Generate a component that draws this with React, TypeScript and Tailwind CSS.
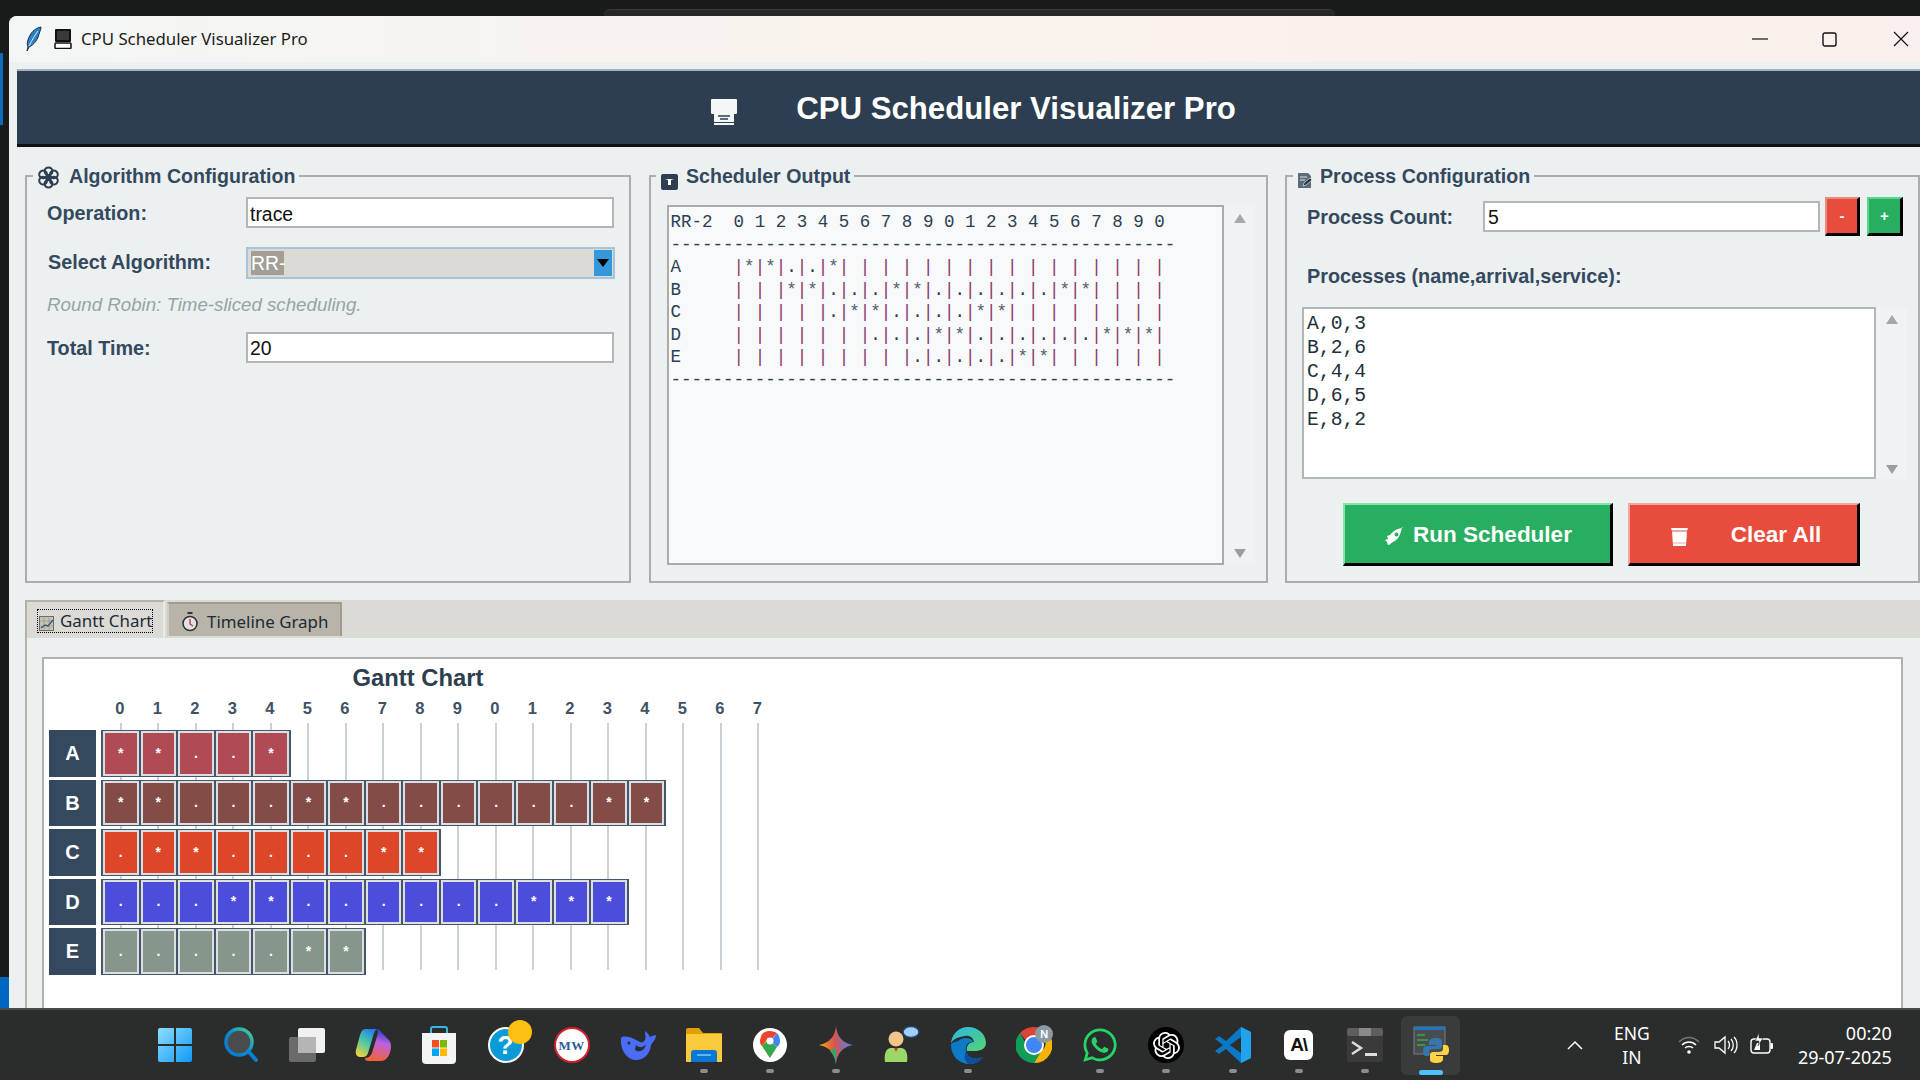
import React from "react";
import { FaWhatsapp } from "react-icons/fa";
import { SiOpenai } from "react-icons/si";

const SANS = "[font-family:'Liberation_Sans',Arial,sans-serif]";

function Arrow({ down = false, className = "" }: { down?: boolean; className?: string }) {
  return (
    <svg width="14" height="11" viewBox="0 0 14 11" className={className}>
      <polygon points={down ? "1,1 13,1 7,10" : "1,10 13,10 7,1"} fill={down ? "#999fa1" : "#a3a8aa"} />
    </svg>
  );
}

function Scrollbar({ top, bottom }: { top: string; bottom: string }) {
  return (
    <div className={`w-[31px] flex flex-col items-center justify-between bg-[#f0f3f4] ${top} ${bottom}`}>
      <Arrow />
      <Arrow down />
    </div>
  );
}

function Box({ title, icon, width, legendMl, children }: { title: string; icon: React.ReactNode; width: string; legendMl: string; children: React.ReactNode }) {
  return (
    <fieldset className={`${width} h-[421px] border-2 border-[#a9afb1] min-w-0`}>
      <legend className={`${legendMl} h-[28px] pt-[2px] flex items-center px-[4px] text-[19.6px] font-bold text-[#34495e]`}>
        {icon}
        <span>{title}</span>
      </legend>
      {children}
    </fieldset>
  );
}

const cells: Record<string, string> = {
  A: "**..*",
  B: "**...**......**",
  C: ".**....**",
  D: "...**......***",
  E: ".....**",
};
const cellColor: Record<string, string> = { A: "bg-[#b04a55]", B: "bg-[#834c47]", C: "bg-[#dd4628]", D: "bg-[#4d4ddb]", E: "bg-[#87968a]" };
const axis = ["0", "1", "2", "3", "4", "5", "6", "7", "8", "9", "0", "1", "2", "3", "4", "5", "6", "7"];

const outputLines = [
  "RR-2  0 1 2 3 4 5 6 7 8 9 0 1 2 3 4 5 6 7 8 9 0",
  "------------------------------------------------",
  "A     |*|*|.|.|*| | | | | | | | | | | | | | | |",
  "B     | | |*|*|.|.|.|*|*|.|.|.|.|.|.|*|*| | | |",
  "C     | | | | |.|*|*|.|.|.|.|*|*| | | | | | | |",
  "D     | | | | | | |.|.|.|*|*|.|.|.|.|.|.|*|*|*|",
  "E     | | | | | | | | |.|.|.|.|.|*|*| | | | | |",
  "------------------------------------------------",
];

function OutputLine({ text }: { text: string }) {
  return (
    <div className="h-[22.5px] leading-[22.5px]">
      {text.split("").map((c, i) =>
        c === "|" ? (
          <span key={i} className="text-[#8a3d6c]">|</span>
        ) : c === "*" ? (
          <span key={i} className="text-[#55606a]">*</span>
        ) : (
          <span key={i}>{c}</span>
        ),
      )}
    </div>
  );
}

function Win() {
  return (
    <svg width="36" height="36" viewBox="0 0 36 36">
      <defs>
        <linearGradient id="w1" x1="0" y1="0" x2="1" y2="1">
          <stop offset="0" stopColor="#8fdcff" />
          <stop offset="1" stopColor="#0f9bf5" />
        </linearGradient>
      </defs>
      <path d="M1 3a2 2 0 0 1 2-2h14v16H1zM19 1h14a2 2 0 0 1 2 2v14H19zM1 19h16v16H3a2 2 0 0 1-2-2zM19 19h16v14a2 2 0 0 1-2 2H19z" fill="url(#w1)" />
    </svg>
  );
}
function Search() {
  return (
    <svg width="36" height="36" viewBox="0 0 36 36">
      <defs>
        <linearGradient id="s1" x1="1" y1="0" x2="0" y2="1">
          <stop offset="0" stopColor="#47d68c" />
          <stop offset="0.5" stopColor="#0b8ad6" />
          <stop offset="1" stopColor="#0a78c8" />
        </linearGradient>
      </defs>
      <circle cx="16" cy="15" r="13" fill="#4a4b4d" stroke="url(#s1)" strokeWidth="3.5" />
      <path d="M26 25l7 8" stroke="#0b7fd0" strokeWidth="4" strokeLinecap="round" />
    </svg>
  );
}
function TaskView() {
  return (
    <svg width="38" height="36" viewBox="0 0 38 36">
      <rect x="1" y="10" width="27" height="25" rx="2" fill="#6a6a6a" />
      <rect x="10" y="1" width="27" height="25" rx="2" fill="#f1f1f1" />
      <rect x="10" y="10" width="18" height="16" fill="#b5b5b5" />
    </svg>
  );
}
function Copilot() {
  return (
    <svg width="36" height="36" viewBox="0 0 36 36">
      <defs>
        <linearGradient id="c1" x1="0.7" y1="0" x2="0.2" y2="1">
          <stop offset="0" stopColor="#1f7ff0" />
          <stop offset="0.5" stopColor="#4fc9a0" />
          <stop offset="1" stopColor="#f4d23a" />
        </linearGradient>
        <linearGradient id="c2" x1="0.5" y1="0" x2="0.3" y2="1">
          <stop offset="0" stopColor="#1e45c8" />
          <stop offset="0.4" stopColor="#c060e0" />
          <stop offset="1" stopColor="#f5632a" />
        </linearGradient>
      </defs>
      <path d="M22 2c2 0 3 1 4 3l7 7c2 2 3 4 3 7 0 8-4 15-10 15H13c-2 0-3-1-3-3 3 0 6-2 7-5l6-20z" fill="url(#c2)" />
      <path d="M10 2h13c-2 0-3 2-4 4l-6 20c-1 3-3 4-5 4H5c-3 0-5-3-4-7l4-15c1-4 3-6 5-6z" fill="url(#c1)" />
    </svg>
  );
}
function Store() {
  return (
    <svg width="36" height="38" viewBox="0 0 36 38">
      <path d="M10 8V3a2 2 0 0 1 2-2h12a2 2 0 0 1 2 2v5" fill="none" stroke="#38b6e8" strokeWidth="2" />
      <path d="M1 7h34v27a4 4 0 0 1-4 4H5a4 4 0 0 1-4-4z" fill="#f4f4f4" />
      <rect x="11" y="14" width="7" height="7.5" fill="#f25022" />
      <rect x="19" y="14" width="7" height="7.5" fill="#7fba00" />
      <rect x="11" y="22.5" width="7" height="7.5" fill="#00a4ef" />
      <rect x="19" y="22.5" width="7" height="7.5" fill="#ffb900" />
    </svg>
  );
}
function Help() {
  return (
    <div className="relative w-[36px] h-[36px] rounded-full bg-[#0a9ad8] border-2 border-white flex items-center justify-center">
      <span className={`${SANS} text-white font-bold text-[26px] leading-none`}>?</span>
      <span className="absolute -top-[9px] left-[18px] w-[24px] h-[24px] rounded-full bg-[#fcc010]" />
    </div>
  );
}
function MW() {
  return (
    <div className="w-[36px] h-[36px] rounded-full bg-white border-2 border-[#d3202f] flex items-center justify-center">
      <span className="[font-family:'Liberation_Serif',serif] text-[#2b5d94] font-bold text-[13px] leading-none tracking-[0.5px]">MW</span>
    </div>
  );
}
function Deep() {
  return (
    <svg width="36" height="30" viewBox="0 0 36 30">
      <path d="M1 8C3 5 12 7 18 11c3 2 5 2 7-1 1-2 0-6 0-9 3 2 4 4 5 6 2-1 4-2 6-2 0 4-3 7-5 10-1 9-7 15-15 15C7 30 0 20 1 8z" fill="#4a6cf7" />
      <path d="M16 15c3 3 7 3 10-1-1 6-6 9-11 6z" fill="#2b2c2c" />
      <circle cx="9" cy="13" r="1.6" fill="#2b2c2c" />
    </svg>
  );
}
function Folder() {
  return (
    <svg width="38" height="36" viewBox="0 0 38 36">
      <path d="M1 3a2 2 0 0 1 2-2h11l4 5h18a1 1 0 0 1 1 1v4H1z" fill="#e0a000" />
      <path d="M1 7h36v27a1 1 0 0 1-1 1H2a1 1 0 0 1-1-1z" fill="#fbc93c" />
      <path d="M6 26a3 3 0 0 1 3-3h20a3 3 0 0 1 3 3v9H6z" fill="#0a78d0" />
      <rect x="12" y="27" width="14" height="2" fill="#5cb8f5" />
    </svg>
  );
}
function Maps() {
  return (
    <svg width="36" height="36" viewBox="0 0 36 36">
      <circle cx="18" cy="18" r="17" fill="#fff" />
      <path d="M18 4c-6 0-10 4-10 10 0 2 1 4 2 5l8 12z" fill="#fbbc04" />
      <path d="M10 7L8 14c0 2 1 4 2 5l6-8z" fill="#ea4335" />
      <path d="M18 31l7-11-8-8-7 7z" fill="#34a853" />
      <path d="M25 6c2 2 3 5 3 8s-1 4-3 6l-6-6z" fill="#4285f4" />
      <path d="M10 7c2-2 5-3 8-3 3 0 5 1 7 2l-6 7z" fill="#ea4335" />
      <circle cx="18" cy="14" r="3.5" fill="#fff" />
    </svg>
  );
}
function Gemini() {
  return (
    <svg width="34" height="38" viewBox="0 0 34 38">
      <defs>
        <linearGradient id="g1" x1="0" y1="0.5" x2="1" y2="0.5">
          <stop offset="0" stopColor="#f4b400" />
          <stop offset="0.45" stopColor="#d9534f" />
          <stop offset="1" stopColor="#4285f4" />
        </linearGradient>
      </defs>
      <path d="M17 0c1 10 6 17 17 19-11 2-16 9-17 19C16 28 11 21 0 19 11 17 16 10 17 0z" fill="url(#g1)" />
      <path d="M17 22c0 6 0 12 0 16-1-6-3-10-6-13z" fill="#2fa866" />
    </svg>
  );
}
function Person() {
  return (
    <svg width="38" height="38" viewBox="0 0 38 38">
      <circle cx="13" cy="13" r="7.5" fill="#f2c58a" />
      <path d="M2 36c-1-6 0-13 5-14h12c5 1 6 8 5 14z" fill="#9bd86a" />
      <path d="M11 22h4l-2 4z" fill="#d33" />
      <ellipse cx="28" cy="6" rx="8" ry="5.5" fill="#9fd0f5" stroke="#24446b" strokeWidth="1.5" />
    </svg>
  );
}
function Edge() {
  return (
    <svg width="36" height="38" viewBox="0 0 36 38">
      <defs>
        <linearGradient id="e1" x1="0" y1="0" x2="1" y2="1">
          <stop offset="0" stopColor="#2cb5e8" />
          <stop offset="1" stopColor="#54d66e" />
        </linearGradient>
      </defs>
      <path d="M1 19C1 8 9 1 18 1c10 0 18 7 18 16 0 6-6 8-11 8H17c-1-5 2-9 7-9-1-5-5-7-9-6C7 11 1 14 1 19z" fill="url(#e1)" />
      <path d="M1 19c0 11 8 19 19 19 6 0 10-3 13-7-7 3-15 2-17-6-1-5 2-10 8-9-4-5-11-5-16-1-4 1-7 2-7 4z" fill="#0c7bc8" />
      <path d="M16 25c2 8 10 9 17 6-3 4-7 7-13 7-2 0-4-2-5-5-1-3 0-6 1-8z" fill="#0a4f9a" />
    </svg>
  );
}
function Chrome() {
  return (
    <div className="relative w-[36px] h-[38px]">
      <svg width="36" height="38" viewBox="0 0 36 38">
        <path d="M18 1a18 18 0 0 1 16 9H18a9 9 0 0 0-8 5L4 7A18 18 0 0 1 18 1z" fill="#db4437" />
        <path d="M34 10a18 18 0 0 1-16 27l7-12a9 9 0 0 0 1-15z" fill="#f4b400" />
        <path d="M18 37A18 18 0 0 1 4 7l6 11a9 9 0 0 0 15 7z" fill="#0f9d58" />
        <circle cx="18" cy="19" r="9" fill="#4285f4" stroke="#fff" strokeWidth="2" />
      </svg>
      <span className={`absolute -top-[1px] -right-[1px] w-[18px] h-[18px] rounded-full bg-[#8a9aa4] text-white text-[11px] font-bold flex items-center justify-center ${SANS}`}>N</span>
    </div>
  );
}
function OpenAI() {
  return (
    <div className="w-[36px] h-[36px] rounded-full bg-black flex items-center justify-center">
      <SiOpenai size={27} color="#fff" />
    </div>
  );
}
function VSCode() {
  return (
    <svg width="36" height="38" viewBox="0 0 36 38">
      <path d="M26 1l10 5v26l-10 5-15-14-7 5-4-3 8-6-8-6 4-3 7 5z" fill="#0a78c4" />
      <path d="M26 1l10 5v26l-10 5z" fill="#20a4ee" />
      <path d="M26 11L15 19l11 8z" fill="#2b2c2c" />
    </svg>
  );
}
function Anthropic() {
  return (
    <div className="w-[29px] h-[30px] mt-[-1px] rounded-[6px] bg-white flex items-center justify-center">
      <span className={`${SANS} text-[#111] font-bold text-[19px] leading-none tracking-[-1px]`}>A\</span>
    </div>
  );
}
function Terminal() {
  return (
    <svg width="36" height="34" viewBox="0 0 36 34">
      <rect width="36" height="34" rx="2" fill="#3a3a3a" />
      <rect width="36" height="8" rx="2" fill="#5e5e5e" />
      <rect x="12" width="12" height="8" fill="#8a8a8a" />
      <path d="M5 14l9 6-9 6" stroke="#ddd" strokeWidth="2.5" fill="none" />
      <rect x="18" y="25" width="12" height="3" fill="#ddd" />
    </svg>
  );
}
function Python() {
  return (
    <svg width="36" height="38" viewBox="0 0 36 38">
      <rect x="1" y="1" width="31" height="27" fill="#4a4d50" stroke="#7a7d80" />
      <rect x="1" y="1" width="31" height="3" fill="#1a78c8" />
      <path d="M4 9h8M4 14h11M4 19h8" stroke="#3aa83a" strokeWidth="1.5" />
      <path d="M23 12c-4 0-7 1-7 4v3h7v1h-10c-2 0-3 2-3 5s1 5 3 5h3v-4c0-2 2-3 4-3h6c2 0 3-2 3-3v-5c0-2-3-3-6-3z" fill="#3776ab" />
      <path d="M23 37c4 0 7-1 7-4v-3h-7v-1h10c2 0 3-2 3-5s-1-5-3-5h-3v4c0 2-2 3-4 3h-6c-2 0-3 2-3 3v5c0 2 3 3 6 3z" fill="#ffd343" />
    </svg>
  );
}

const dock: { node: React.ReactNode; dot?: boolean }[] = [
  { node: <Win /> },
  { node: <Search /> },
  { node: <TaskView /> },
  { node: <Copilot /> },
  { node: <Store /> },
  { node: <Help /> },
  { node: <MW /> },
  { node: <Deep /> },
  { node: <Folder />, dot: true },
  { node: <Maps />, dot: true },
  { node: <Gemini />, dot: true },
  { node: <Person /> },
  { node: <Edge />, dot: true },
  { node: <Chrome /> },
  { node: <FaWhatsapp size={38} color="#25d366" />, dot: true },
  { node: <OpenAI />, dot: true },
  { node: <VSCode />, dot: true },
  { node: <Anthropic />, dot: true },
  { node: <Terminal />, dot: true },
];

function TitleBar() {
  return (
    <div className="h-[46px] shrink-0 rounded-tl-[8px] flex items-center bg-gradient-to-r from-[#f3f6f5] via-[#faf2ec] to-[#faf0ed] [font-family:'Noto_Sans',sans-serif]">
      <svg width="16" height="26" viewBox="0 0 16 26" className="ml-[17px]">
        <path d="M15 1C9 2 4 7 2 14c-1 3-1 5 0 7l-1 4 2-4c5-2 9-8 10-13 1-3 2-5 2-7z" fill="#2f7fc4" stroke="#12324f" strokeWidth="1" />
        <path d="M12 5C9 9 6 14 3 20" stroke="#dcecf8" strokeWidth="1" fill="none" />
      </svg>
      <svg width="18" height="20" viewBox="0 0 18 20" className="ml-[12px]">
        <rect x="1" y="0" width="16" height="13" rx="1" fill="#111" />
        <rect x="3" y="2" width="12" height="9" fill="#3a3a3a" />
        <rect x="1" y="14" width="16" height="5.5" rx="1" fill="#fff" stroke="#111" strokeWidth="1.5" />
      </svg>
      <span className="ml-[9px] text-[16.8px] text-[#1c1c1c] whitespace-nowrap">CPU Scheduler Visualizer Pro</span>
      <div className="ml-auto flex items-center">
        <svg width="16" height="16" viewBox="0 0 16 16" className="mr-[54px]">
          <path d="M0 8h16" stroke="#111" strokeWidth="1.2" />
        </svg>
        <svg width="15" height="15" viewBox="0 0 15 15" className="mr-[56px]">
          <rect x="1" y="1" width="13" height="13" rx="2" fill="none" stroke="#111" strokeWidth="1.4" />
        </svg>
        <svg width="16" height="16" viewBox="0 0 16 16" className="mr-[11px]">
          <path d="M1 1l14 14M15 1L1 15" stroke="#111" strokeWidth="1.2" />
        </svg>
      </div>
    </div>
  );
}

function Header() {
  return (
    <div className="ml-[8px] mt-[7px] h-[78px] shrink-0 bg-[#2c3e50] border-t-2 border-t-[#a9b0b5] border-b-[3px] border-b-[#0e1216] flex items-center justify-center pl-[10px]">
      <svg width="26" height="26" viewBox="0 0 26 26" className="mt-[8px]">
        <rect x="0" y="0" width="26" height="15" rx="1" fill="#f4f6f7" />
        <rect x="3" y="15" width="20" height="11" fill="#f4f6f7" />
        <path d="M7 17h12M9 20h8" stroke="#2c3e50" strokeWidth="1.5" />
        <rect x="3" y="23" width="20" height="1" fill="#2c3e50" />
      </svg>
      <span className="ml-[59px] mt-[4px] text-[31.2px] font-bold text-white whitespace-nowrap">CPU Scheduler Visualizer Pro</span>
    </div>
  );
}

function GearIcon() {
  const a = [0, 60, 120, 180, 240, 300];
  return (
    <svg width="23" height="23" viewBox="0 0 24 24" className="mr-[9px]">
      {a.map((d) => (
        <circle key={d} cx="12" cy="5.5" r="4" fill="none" stroke="#2c3e50" strokeWidth="2.2" transform={`rotate(${d} 12 12)`} />
      ))}
      <circle cx="12" cy="12" r="2.5" fill="#2c3e50" />
    </svg>
  );
}

function AlgorithmGroup() {
  return (
    <Box title="Algorithm Configuration" icon={<GearIcon />} width="w-[606px]" legendMl="ml-[6px]">
      <div className="mt-[7px] flex items-center">
        <div className="w-[219px] pl-[20px] pt-[2px] text-[19.8px] font-bold text-[#34495e]">Operation:</div>
        <div className="w-[368px] h-[31px] bg-white border-2 border-[#b3b6b7] flex items-center pl-[2px] pt-[3px] text-[19.4px] text-[#111]">trace</div>
      </div>
      <div className="mt-[18px] flex items-center">
        <div className="w-[219px] pl-[21px] text-[19.8px] font-bold text-[#34495e]">Select Algorithm:</div>
        <div className="w-[369px] h-[32px] bg-[#dcdad5] border-2 border-[#a9c4d8] flex items-center pl-[3px] pr-[1px] justify-between">
          <span className="h-[24px] w-[33px] bg-[#a39f98] text-white text-[19.4px] leading-[24px]">RR-</span>
          <span className="w-[18px] h-[26px] bg-[#3498db] flex items-center justify-center">
            <svg width="12" height="8" viewBox="0 0 12 8">
              <polygon points="0,0 12,0 6,8" fill="#000" />
            </svg>
          </span>
        </div>
      </div>
      <div className="mt-[16px] h-[20px] leading-[20px] pl-[20px] text-[18.7px] italic text-[#95a5a6] whitespace-nowrap">Round Robin: Time-sliced scheduling.</div>
      <div className="mt-[17px] flex items-center">
        <div className="w-[219px] pl-[20px] pt-[2px] text-[19.8px] font-bold text-[#34495e]">Total Time:</div>
        <div className="w-[368px] h-[31px] bg-white border-2 border-[#b3b6b7] flex items-center pl-[2px] pt-[2px] text-[19.4px] text-[#111]">20</div>
      </div>
    </Box>
  );
}

function OutputGroup() {
  return (
    <Box
      title="Scheduler Output"
      icon={
        <svg width="17" height="16" viewBox="0 0 17 16" className="mr-[8px] ml-[1px] mt-[10px]">
          <rect width="17" height="16" rx="2" fill="#2c3e50" />
          <path d="M4 5h9l-3 1v5H7V6z" fill="#fff" />
        </svg>
      }
      width="w-[619px]"
      legendMl="ml-[5px]"
    >
      <div className="mt-[15px] ml-[16px] flex h-[360px]">
        <div className="w-[557px] bg-[#f8f9fa] border-2 border-[#a9acad] pl-[1.5px] pt-[4px] [font-family:'Liberation_Mono',monospace] text-[17.5px] text-[#2c3e50] whitespace-pre">
          {outputLines.map((l, i) => (
            <OutputLine key={i} text={l} />
          ))}
        </div>
        <Scrollbar top="pt-[8px]" bottom="pb-[6px]" />
      </div>
    </Box>
  );
}

function ProcessGroup() {
  const raised = "border-t-2 border-l-2 border-r-[3px] border-b-[3px] border-r-black border-b-black";
  return (
    <Box
      title="Process Configuration"
      icon={
        <svg width="16" height="16" viewBox="0 0 16 16" className="mr-[7px] mt-[8px]">
          <path d="M1 0h10l3 3v12H1z" fill="#5c6b78" />
          <path d="M3 4h7M3 7h5" stroke="#dfe4e8" strokeWidth="1" />
          <path d="M6 13l1-3 6-5 2 2-6 5z" fill="#223140" stroke="#fff" strokeWidth="0.6" />
        </svg>
      }
      width="flex-1"
      legendMl="ml-[6px]"
    >
      <div className="mt-[7px] flex items-center h-[39px]">
        <div className="w-[196px] pl-[20px] pt-[2px] text-[19.8px] font-bold text-[#34495e]">Process Count:</div>
        <div className="w-[337px] h-[31px] bg-white border-2 border-[#b3b6b7] flex items-center pl-[3px] pt-[2px] text-[19.4px] text-[#111]">5</div>
        <div className={`ml-[5px] w-[35px] h-[39px] bg-[#e74c3c] border-t-[#e98a80] border-l-[#e98a80] flex items-center justify-center text-white font-bold text-[15px] ${raised}`}>-</div>
        <div className={`ml-[7px] w-[36px] h-[39px] bg-[#27ae60] border-t-[#58d68d] border-l-[#58d68d] flex items-center justify-center text-white font-bold text-[15px] ${raised}`}>+</div>
      </div>
      <div className="mt-[28px] h-[24px] leading-[24px] pl-[20px] text-[19.8px] font-bold text-[#34495e] whitespace-nowrap">Processes (name,arrival,service):</div>
      <div className="mt-[19px] ml-[15px] flex h-[172px]">
        <div className="w-[574px] bg-white border-2 border-[#b3b6b7] pl-[3px] pt-[3px] [font-family:'Liberation_Mono',monospace] text-[19.7px] leading-[24px] text-[#22303c] whitespace-pre">
          {"A,0,3\nB,2,6\nC,4,4\nD,6,5\nE,8,2"}
        </div>
        <Scrollbar top="pt-[7px]" bottom="pb-[4px]" />
      </div>
      <div className="mt-[24px] ml-[56px] flex gap-[15px] text-white font-bold text-[22.5px]">
        <div className={`w-[270px] h-[63px] bg-[#27ae60] border-t-[#7ee8a8] border-l-[#7ee8a8] flex items-center justify-center pt-[2px] pl-[1px] ${raised}`}>
          <svg width="20" height="20" viewBox="0 0 20 20" className="mr-[9px] mt-[4px]">
            <path d="M19 1c-5 0-10 3-13 7L3 9l1 3-3 1 2 2 1 3 3-1-1 0 3-2c5-2 8-8 9-15z" fill="#fff" />
            <circle cx="12.5" cy="7.5" r="2" fill="#27ae60" />
          </svg>
          <span>Run Scheduler</span>
        </div>
        <div className={`w-[232px] h-[63px] bg-[#e74c3c] border-t-[#f5a59c] border-l-[#f5a59c] flex items-center justify-center pt-[2px] pl-[4px] ${raised}`}>
          <svg width="19" height="20" viewBox="0 0 19 20" className="mr-[42px] mt-[4px]">
            <path d="M1 1h17l-1 3-1 15H3L2 4z" fill="#fff" />
            <path d="M2 4h15" stroke="#e74c3c" strokeWidth="1" />
            <path d="M3 16h13" stroke="#e9a79f" strokeWidth="1" />
          </svg>
          <span>Clear All</span>
        </div>
      </div>
    </Box>
  );
}

function Tabs() {
  return (
    <div className="ml-[16px] mt-[17px] h-[38px] shrink-0 bg-[#dcdad5] flex items-end [font-family:'Noto_Sans',sans-serif] text-[16.9px] text-[#1e2a36]">
      <div className="w-[140px] h-[38px] bg-[#dcdad5] border-t-2 border-l-2 border-r-2 border-t-[#b5b2a8] border-l-[#b5b2a8] border-r-[#ecebe7] pl-[10px] pt-[7px]">
        <div className="w-[116px] h-[24px] border border-dotted border-black flex items-center pl-[1px] whitespace-nowrap overflow-hidden">
          <svg width="15" height="15" viewBox="0 0 15 15" className="mr-[6px] mt-[4px] shrink-0">
            <rect x="0.5" y="0.5" width="14" height="14" fill="#c8c3b4" stroke="#6a6a6a" />
            <path d="M0 10h15M0 5h15M5 0v15M10 0v15" stroke="#8a8a8a" strokeWidth="0.6" />
            <path d="M2 12l4-3 3 1 5-6" stroke="#3a5a7a" strokeWidth="1.4" fill="none" />
          </svg>
          <span>Gantt Chart</span>
        </div>
      </div>
      <div className="ml-[2px] w-[175px] h-[34px] mb-[2px] bg-[#b8b4a9] border-t-2 border-l-2 border-r-2 border-t-[#a09c90] border-l-[#cfccc3] border-r-[#a09c90] flex items-center pl-[13px] pt-[3px] whitespace-nowrap">
        <svg width="16" height="20" viewBox="0 0 16 20" className="mr-[9px]">
          <rect x="5.5" y="0" width="5" height="2" fill="#333" />
          <circle cx="8" cy="11.5" r="7" fill="#dfe3e6" stroke="#333" strokeWidth="1.6" />
          <path d="M8 7v5l3 2" stroke="#b33" strokeWidth="1.3" fill="none" />
        </svg>
        <span>Timeline Graph</span>
      </div>
    </div>
  );
}

function Gantt() {
  return (
    <div className={`flex-1 ml-[16px] border-l-2 border-l-[#b5b2a8] pl-[15px] pt-[19px] ${SANS}`}>
      <div className="h-full mr-[17px] bg-white border-2 border-b-0 border-[#b0b2b0]">
        <div className="mt-[4px] w-[748px] h-[30px] leading-[30px] text-center text-[23.8px] font-bold text-[#2c3e50]">Gantt Chart</div>
        <div className="mt-[5px] ml-[57.2px] flex h-[20px]">
          {axis.map((n, i) => (
            <div key={i} className="w-[37.5px] text-center text-[16.5px] leading-[20px] font-bold text-[#3e5166]">{n}</div>
          ))}
        </div>
        <div className="relative ml-[5px] mt-[5px] h-[252px] pt-[7px]">
          <div className="absolute left-[53px] top-0 h-[247px] flex">
            {axis.map((_, i) => (
              <div key={i} className="w-[37.5px] flex justify-center">
                <div className="w-[2px] h-full bg-[#ccd1d5]" />
              </div>
            ))}
          </div>
          <div className="relative flex flex-col gap-[3px]">
            {Object.keys(cells).map((k) => (
              <div key={k} className="flex h-[46.5px]">
                <div className="w-[47px] mr-[5px] bg-[#34495e] text-white font-bold text-[20px] flex items-center justify-center">{k}</div>
                <div className="flex p-[1px] bg-[#46566a]">
                  {cells[k].split("").map((c, i) => (
                    <div key={i} className="w-[37.55px] px-[1px] h-full bg-[#46566a]">
                      <div className={`h-full border-2 border-[#dcdfe1] flex items-center justify-center text-white font-bold text-[14px] ${cellColor[k]}`}>{c}</div>
                    </div>
                  ))}
                </div>
              </div>
            ))}
          </div>
        </div>
      </div>
    </div>
  );
}

function Taskbar() {
  return (
    <div className="h-[72px] shrink-0 bg-[#2b2c2c] border-t-2 border-t-[#4a4a4a] flex pl-[142px] [font-family:'Noto_Sans',sans-serif]">
      {dock.map((d, i) => (
        <div key={i} className="relative w-[66.1px] flex items-center justify-center">
          {d.node}
          {d.dot && <span className="absolute bottom-[7px] left-[29px] w-[8px] h-[4px] rounded-full bg-[#8c8c8c]" />}
        </div>
      ))}
      <div className="relative w-[66.1px] flex items-center justify-center">
        <div className="w-[59px] h-[59px] rounded-[6px] bg-[#3a3b3b] flex items-center justify-center">
          <Python />
        </div>
        <span className="absolute bottom-[5px] left-[21px] w-[24px] h-[5px] rounded-full bg-[#4cc2ff]" />
      </div>
      <div className="flex items-center text-white">
        <svg width="16" height="10" viewBox="0 0 16 10" className="ml-[103px]">
          <path d="M1 9l7-7 7 7" fill="none" stroke="#fff" strokeWidth="1.5" />
        </svg>
        <div className="ml-[25px] w-[48px] text-center text-[17.5px] leading-[24px]">
          <div>ENG</div>
          <div>IN</div>
        </div>
        <svg width="22" height="20" viewBox="0 0 22 20" className="ml-[22px]">
          <path d="M1 7c6-6 14-6 20 0" fill="none" stroke="#777" strokeWidth="1.5" />
          <path d="M4 10c4-4 10-4 14 0M7 13c2-2 6-2 8 0" fill="none" stroke="#fff" strokeWidth="1.5" />
          <circle cx="11" cy="17" r="1.8" fill="#fff" />
        </svg>
        <svg width="24" height="22" viewBox="0 0 24 22" className="ml-[14px]">
          <path d="M1 8h4l6-5v16l-6-5H1z" fill="none" stroke="#fff" strokeWidth="1.3" />
          <path d="M14 7c2 2 2 6 0 8M17 5c3 3 3 9 0 12M20 3c4 4 4 12 0 16" fill="none" stroke="#fff" strokeWidth="1.3" />
        </svg>
        <svg width="24" height="24" viewBox="0 0 24 24" className="ml-[12px]">
          <rect x="1" y="6" width="19" height="14" rx="3" fill="none" stroke="#fff" strokeWidth="1.4" />
          <rect x="20.5" y="10" width="2.5" height="6" rx="1" fill="#fff" />
          <path d="M4 17l3-7h3v7z" fill="#fff" />
          <path d="M9 0L5 8h4l-1 5 5-8H9z" fill="#fff" stroke="#2b2c2c" strokeWidth="0.6" />
        </svg>
        <div className="ml-[14px] w-[104px] text-right text-[18px] leading-[24px] whitespace-nowrap">
          <div>00:20</div>
          <div>29-07-2025</div>
        </div>
      </div>
    </div>
  );
}

export default function App() {
  return (
    <div className={`w-[1920px] h-[1080px] overflow-hidden flex flex-col bg-[#191a1a] ${SANS}`}>
      <div className="h-[16px] shrink-0 pl-[604px] pt-[9px]">
        <div className="w-[731px] h-[7px] rounded-t-[6px] bg-[#272727] border-t border-t-[#3a3a3a]" />
      </div>
      <div className="flex-1 flex min-h-0">
        <div className="w-[9px] shrink-0 flex flex-col">
          <div className="mt-[37px] w-[3px] h-[72px] bg-[#0a6cc0]" />
          <div className="mt-auto w-[9px] h-[31px] bg-[#0067c0]" />
        </div>
        <div className="flex-1 min-w-0 flex flex-col bg-[#ecf0f1] rounded-tl-[8px]">
          <TitleBar />
          <Header />
          <div className="mt-[15px] ml-[16px] flex shrink-0 h-[421px]">
            <AlgorithmGroup />
            <div className="ml-[18px]">
              <OutputGroup />
            </div>
            <div className="ml-[17px] flex-1 flex min-w-0">
              <ProcessGroup />
            </div>
          </div>
          <Tabs />
          <Gantt />
        </div>
      </div>
      <Taskbar />
    </div>
  );
}
